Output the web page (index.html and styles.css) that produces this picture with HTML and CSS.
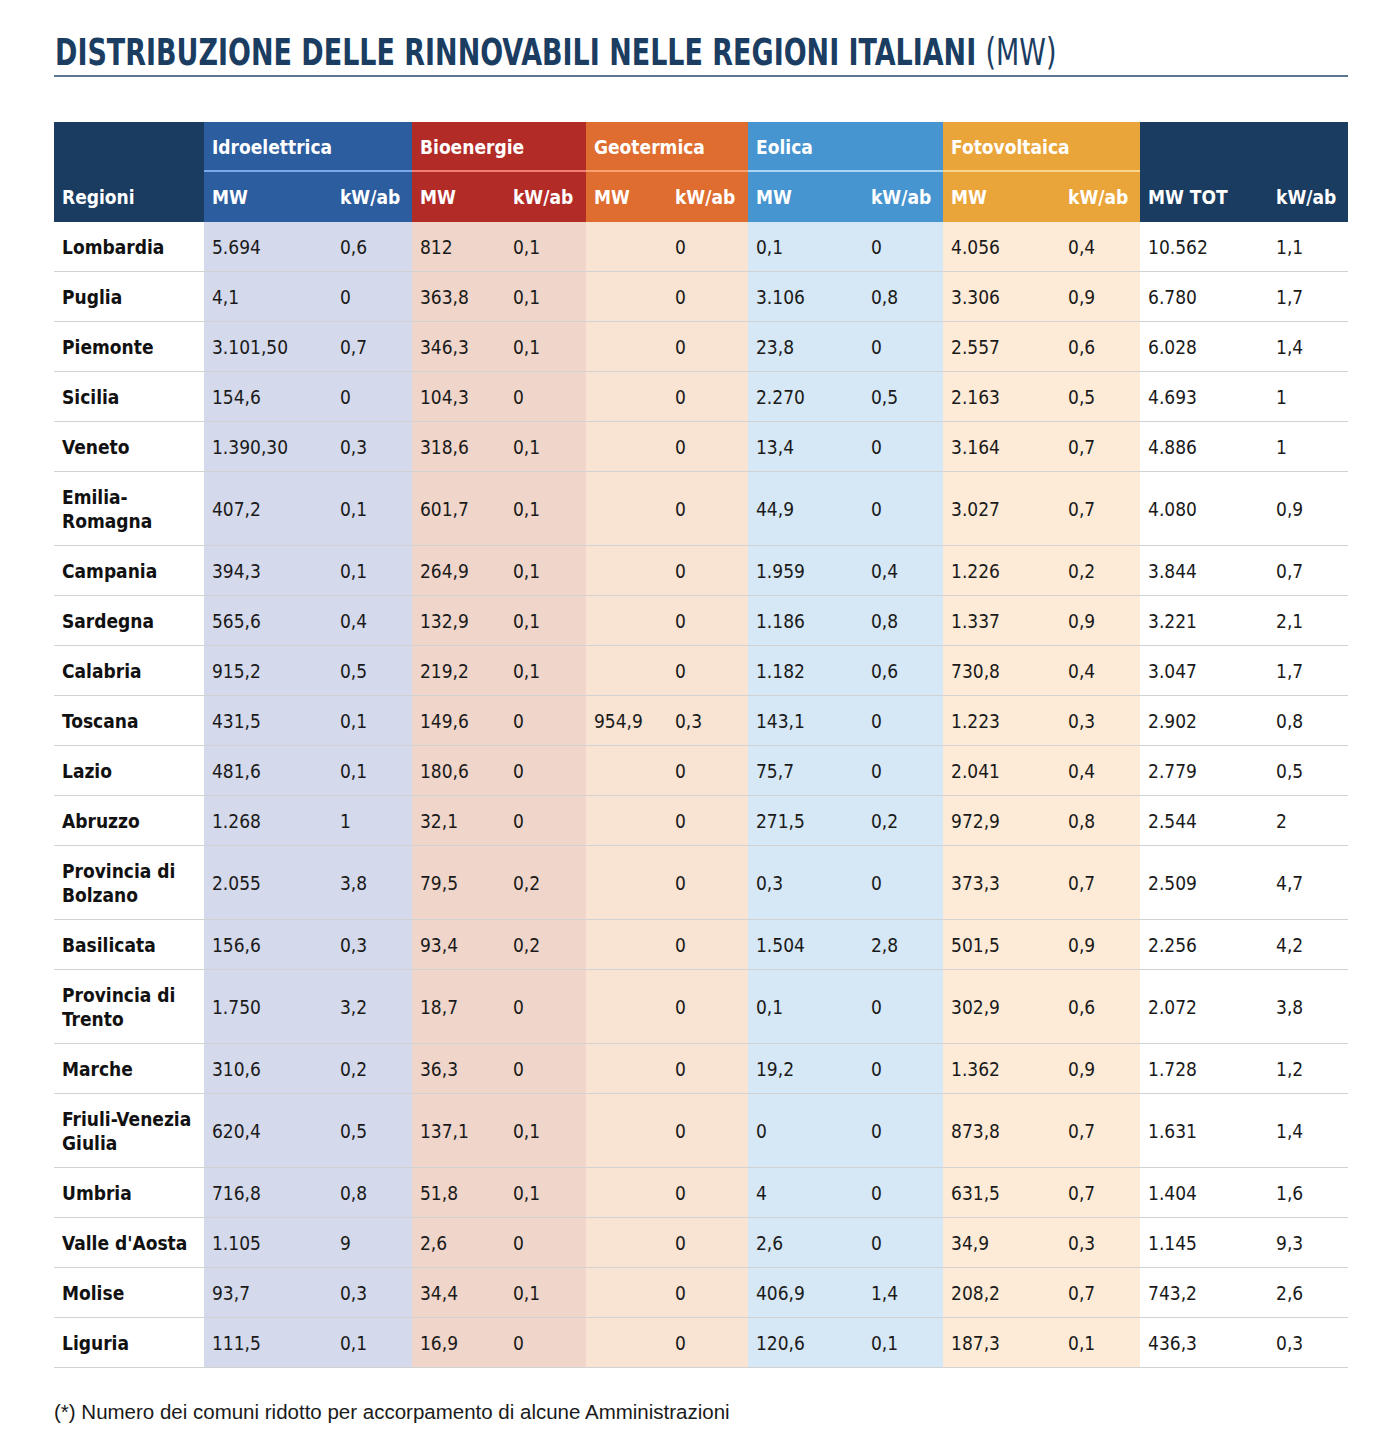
FILE: index.html
```html
<!DOCTYPE html>
<html lang="it">
<head>
<meta charset="utf-8">
<title>Distribuzione delle rinnovabili</title>
<link rel="stylesheet" href="styles.css">
</head>
<body>
<div class="page">
  <h1 class="title"><span class="title-text">DISTRIBUZIONE DELLE RINNOVABILI NELLE REGIONI ITALIANI <span class="unit">(MW)</span></span></h1>
  <table class="grid">
    <colgroup>
      <col class="c-reg">
      <col class="c-idro-mw"><col class="c-kw">
      <col class="c-bio-mw"><col class="c-kw2">
      <col class="c-geo-mw"><col class="c-kw2">
      <col class="c-eol-mw"><col class="c-kw">
      <col class="c-foto-mw"><col class="c-kw">
      <col class="c-tot-mw"><col class="c-kw">
    </colgroup>
    <thead>
      <tr class="grp">
        <th class="h-navy reg" rowspan="2">Regioni</th>
        <th class="h-idro" colspan="2">Idroelettrica</th>
        <th class="h-bio" colspan="2">Bioenergie</th>
        <th class="h-geo" colspan="2">Geotermica</th>
        <th class="h-eol" colspan="2">Eolica</th>
        <th class="h-foto" colspan="2">Fotovoltaica</th>
        <th class="h-navy nol" colspan="2"></th>
      </tr>
      <tr class="sub">
        <th class="h-idro">MW</th><th class="h-idro">kW/ab</th>
        <th class="h-bio">MW</th><th class="h-bio">kW/ab</th>
        <th class="h-geo">MW</th><th class="h-geo">kW/ab</th>
        <th class="h-eol">MW</th><th class="h-eol">kW/ab</th>
        <th class="h-foto">MW</th><th class="h-foto">kW/ab</th>
        <th class="h-navy">MW TOT</th><th class="h-navy">kW/ab</th>
      </tr>
    </thead>
    <tbody>
      <tr><th>Lombardia</th><td class="d-idro">5.694</td><td class="d-idro">0,6</td><td class="d-bio">812</td><td class="d-bio">0,1</td><td class="d-geo"></td><td class="d-geo">0</td><td class="d-eol">0,1</td><td class="d-eol">0</td><td class="d-foto">4.056</td><td class="d-foto">0,4</td><td>10.562</td><td>1,1</td></tr>
      <tr><th>Puglia</th><td class="d-idro">4,1</td><td class="d-idro">0</td><td class="d-bio">363,8</td><td class="d-bio">0,1</td><td class="d-geo"></td><td class="d-geo">0</td><td class="d-eol">3.106</td><td class="d-eol">0,8</td><td class="d-foto">3.306</td><td class="d-foto">0,9</td><td>6.780</td><td>1,7</td></tr>
      <tr><th>Piemonte</th><td class="d-idro">3.101,50</td><td class="d-idro">0,7</td><td class="d-bio">346,3</td><td class="d-bio">0,1</td><td class="d-geo"></td><td class="d-geo">0</td><td class="d-eol">23,8</td><td class="d-eol">0</td><td class="d-foto">2.557</td><td class="d-foto">0,6</td><td>6.028</td><td>1,4</td></tr>
      <tr><th>Sicilia</th><td class="d-idro">154,6</td><td class="d-idro">0</td><td class="d-bio">104,3</td><td class="d-bio">0</td><td class="d-geo"></td><td class="d-geo">0</td><td class="d-eol">2.270</td><td class="d-eol">0,5</td><td class="d-foto">2.163</td><td class="d-foto">0,5</td><td>4.693</td><td>1</td></tr>
      <tr><th>Veneto</th><td class="d-idro">1.390,30</td><td class="d-idro">0,3</td><td class="d-bio">318,6</td><td class="d-bio">0,1</td><td class="d-geo"></td><td class="d-geo">0</td><td class="d-eol">13,4</td><td class="d-eol">0</td><td class="d-foto">3.164</td><td class="d-foto">0,7</td><td>4.886</td><td>1</td></tr>
      <tr><th>Emilia-<br>Romagna</th><td class="d-idro">407,2</td><td class="d-idro">0,1</td><td class="d-bio">601,7</td><td class="d-bio">0,1</td><td class="d-geo"></td><td class="d-geo">0</td><td class="d-eol">44,9</td><td class="d-eol">0</td><td class="d-foto">3.027</td><td class="d-foto">0,7</td><td>4.080</td><td>0,9</td></tr>
      <tr><th>Campania</th><td class="d-idro">394,3</td><td class="d-idro">0,1</td><td class="d-bio">264,9</td><td class="d-bio">0,1</td><td class="d-geo"></td><td class="d-geo">0</td><td class="d-eol">1.959</td><td class="d-eol">0,4</td><td class="d-foto">1.226</td><td class="d-foto">0,2</td><td>3.844</td><td>0,7</td></tr>
      <tr><th>Sardegna</th><td class="d-idro">565,6</td><td class="d-idro">0,4</td><td class="d-bio">132,9</td><td class="d-bio">0,1</td><td class="d-geo"></td><td class="d-geo">0</td><td class="d-eol">1.186</td><td class="d-eol">0,8</td><td class="d-foto">1.337</td><td class="d-foto">0,9</td><td>3.221</td><td>2,1</td></tr>
      <tr><th>Calabria</th><td class="d-idro">915,2</td><td class="d-idro">0,5</td><td class="d-bio">219,2</td><td class="d-bio">0,1</td><td class="d-geo"></td><td class="d-geo">0</td><td class="d-eol">1.182</td><td class="d-eol">0,6</td><td class="d-foto">730,8</td><td class="d-foto">0,4</td><td>3.047</td><td>1,7</td></tr>
      <tr><th>Toscana</th><td class="d-idro">431,5</td><td class="d-idro">0,1</td><td class="d-bio">149,6</td><td class="d-bio">0</td><td class="d-geo">954,9</td><td class="d-geo">0,3</td><td class="d-eol">143,1</td><td class="d-eol">0</td><td class="d-foto">1.223</td><td class="d-foto">0,3</td><td>2.902</td><td>0,8</td></tr>
      <tr><th>Lazio</th><td class="d-idro">481,6</td><td class="d-idro">0,1</td><td class="d-bio">180,6</td><td class="d-bio">0</td><td class="d-geo"></td><td class="d-geo">0</td><td class="d-eol">75,7</td><td class="d-eol">0</td><td class="d-foto">2.041</td><td class="d-foto">0,4</td><td>2.779</td><td>0,5</td></tr>
      <tr><th>Abruzzo</th><td class="d-idro">1.268</td><td class="d-idro">1</td><td class="d-bio">32,1</td><td class="d-bio">0</td><td class="d-geo"></td><td class="d-geo">0</td><td class="d-eol">271,5</td><td class="d-eol">0,2</td><td class="d-foto">972,9</td><td class="d-foto">0,8</td><td>2.544</td><td>2</td></tr>
      <tr><th>Provincia di<br>Bolzano</th><td class="d-idro">2.055</td><td class="d-idro">3,8</td><td class="d-bio">79,5</td><td class="d-bio">0,2</td><td class="d-geo"></td><td class="d-geo">0</td><td class="d-eol">0,3</td><td class="d-eol">0</td><td class="d-foto">373,3</td><td class="d-foto">0,7</td><td>2.509</td><td>4,7</td></tr>
      <tr><th>Basilicata</th><td class="d-idro">156,6</td><td class="d-idro">0,3</td><td class="d-bio">93,4</td><td class="d-bio">0,2</td><td class="d-geo"></td><td class="d-geo">0</td><td class="d-eol">1.504</td><td class="d-eol">2,8</td><td class="d-foto">501,5</td><td class="d-foto">0,9</td><td>2.256</td><td>4,2</td></tr>
      <tr><th>Provincia di<br>Trento</th><td class="d-idro">1.750</td><td class="d-idro">3,2</td><td class="d-bio">18,7</td><td class="d-bio">0</td><td class="d-geo"></td><td class="d-geo">0</td><td class="d-eol">0,1</td><td class="d-eol">0</td><td class="d-foto">302,9</td><td class="d-foto">0,6</td><td>2.072</td><td>3,8</td></tr>
      <tr><th>Marche</th><td class="d-idro">310,6</td><td class="d-idro">0,2</td><td class="d-bio">36,3</td><td class="d-bio">0</td><td class="d-geo"></td><td class="d-geo">0</td><td class="d-eol">19,2</td><td class="d-eol">0</td><td class="d-foto">1.362</td><td class="d-foto">0,9</td><td>1.728</td><td>1,2</td></tr>
      <tr><th>Friuli-Venezia<br>Giulia</th><td class="d-idro">620,4</td><td class="d-idro">0,5</td><td class="d-bio">137,1</td><td class="d-bio">0,1</td><td class="d-geo"></td><td class="d-geo">0</td><td class="d-eol">0</td><td class="d-eol">0</td><td class="d-foto">873,8</td><td class="d-foto">0,7</td><td>1.631</td><td>1,4</td></tr>
      <tr><th>Umbria</th><td class="d-idro">716,8</td><td class="d-idro">0,8</td><td class="d-bio">51,8</td><td class="d-bio">0,1</td><td class="d-geo"></td><td class="d-geo">0</td><td class="d-eol">4</td><td class="d-eol">0</td><td class="d-foto">631,5</td><td class="d-foto">0,7</td><td>1.404</td><td>1,6</td></tr>
      <tr><th>Valle d'Aosta</th><td class="d-idro">1.105</td><td class="d-idro">9</td><td class="d-bio">2,6</td><td class="d-bio">0</td><td class="d-geo"></td><td class="d-geo">0</td><td class="d-eol">2,6</td><td class="d-eol">0</td><td class="d-foto">34,9</td><td class="d-foto">0,3</td><td>1.145</td><td>9,3</td></tr>
      <tr><th>Molise</th><td class="d-idro">93,7</td><td class="d-idro">0,3</td><td class="d-bio">34,4</td><td class="d-bio">0,1</td><td class="d-geo"></td><td class="d-geo">0</td><td class="d-eol">406,9</td><td class="d-eol">1,4</td><td class="d-foto">208,2</td><td class="d-foto">0,7</td><td>743,2</td><td>2,6</td></tr>
      <tr><th>Liguria</th><td class="d-idro">111,5</td><td class="d-idro">0,1</td><td class="d-bio">16,9</td><td class="d-bio">0</td><td class="d-geo"></td><td class="d-geo">0</td><td class="d-eol">120,6</td><td class="d-eol">0,1</td><td class="d-foto">187,3</td><td class="d-foto">0,1</td><td>436,3</td><td>0,3</td></tr>
    </tbody>
  </table>
  <p class="note">(*) Numero dei comuni ridotto per accorpamento di alcune Amministrazioni</p>
</div>
</body>
</html>
```

FILE: styles.css
```css
html, body {
  margin: 0;
  padding: 0;
  background: #ffffff;
}

.page {
  padding: 28px 36px 0 54px;
  width: 1294px;
}

.title {
  margin: 0;
  padding: 4px 0 1px 1px;
  border-bottom: 2px solid #5d7690;
  font-family: "DejaVu Sans Condensed", "Liberation Sans", sans-serif;
  font-weight: 700;
  font-size: 37px;
  line-height: 42px;
  color: #1b3d62;
  white-space: nowrap;
}

.title-text {
  display: inline-block;
  transform: scaleX(0.81);
  transform-origin: 0 50%;
}

.title .unit {
  font-weight: 400;
}

.grid {
  margin-top: 45px;
  width: 1294px;
  table-layout: fixed;
  border-collapse: collapse;
  border-spacing: 0;
  font-family: "DejaVu Sans Condensed", "Liberation Sans", sans-serif;
}

.c-reg { width: 150px; }
.c-idro-mw { width: 128px; }
.c-kw { width: 80px; }
.c-kw2 { width: 81px; }
.c-bio-mw { width: 93px; }
.c-geo-mw { width: 81px; }
.c-eol-mw { width: 115px; }
.c-foto-mw { width: 117px; }
.c-tot-mw { width: 128px; }

.grid thead th {
  color: #ffffff;
  font-weight: 700;
  font-size: 19px;
  text-align: left;
  padding: 0 8px;
  height: 50px;
  white-space: nowrap;
}

.grid thead .grp th {
  vertical-align: middle;
  box-shadow: inset 0 -2px 0 var(--line);
}

.grid thead .grp th.reg,
.grid thead .grp th.nol {
  box-shadow: none;
}

.grid thead th.reg {
  vertical-align: bottom;
  padding-bottom: 14px;
}

.h-navy { background: #1a3c60; }
.h-idro { background: #2c5d9f; --line: #79a9e6; }
.h-bio { background: #b32b27; --line: #f27d74; }
.h-geo { background: #df6d2f; --line: #f7a36f; }
.h-eol { background: #4694d0; --line: #a8d6f8; }
.h-foto { background: #eaa53a; --line: #fbd58e; }

.grid tbody th,
.grid tbody td {
  padding: 13px 8px 12px;
  line-height: 24px;
  font-size: 19px;
  color: #1a1a1a;
  text-align: left;
  vertical-align: middle;
  border-bottom: 1px solid #d2d2d2;
}

.grid tbody th {
  font-weight: 700;
  color: #111111;
}

.grid tbody td {
  font-weight: 400;
}

.d-idro { background: #d4d9eb; }
.d-bio { background: #efd5ca; }
.d-geo { background: #f9e3d2; }
.d-eol { background: #d6e7f5; }
.d-foto { background: #fdebd7; }

.note {
  margin: 32px 0 0 0;
  font-family: "Liberation Sans", sans-serif;
  font-size: 20.5px;
  line-height: 24px;
  color: #1a1a1a;
}
```
